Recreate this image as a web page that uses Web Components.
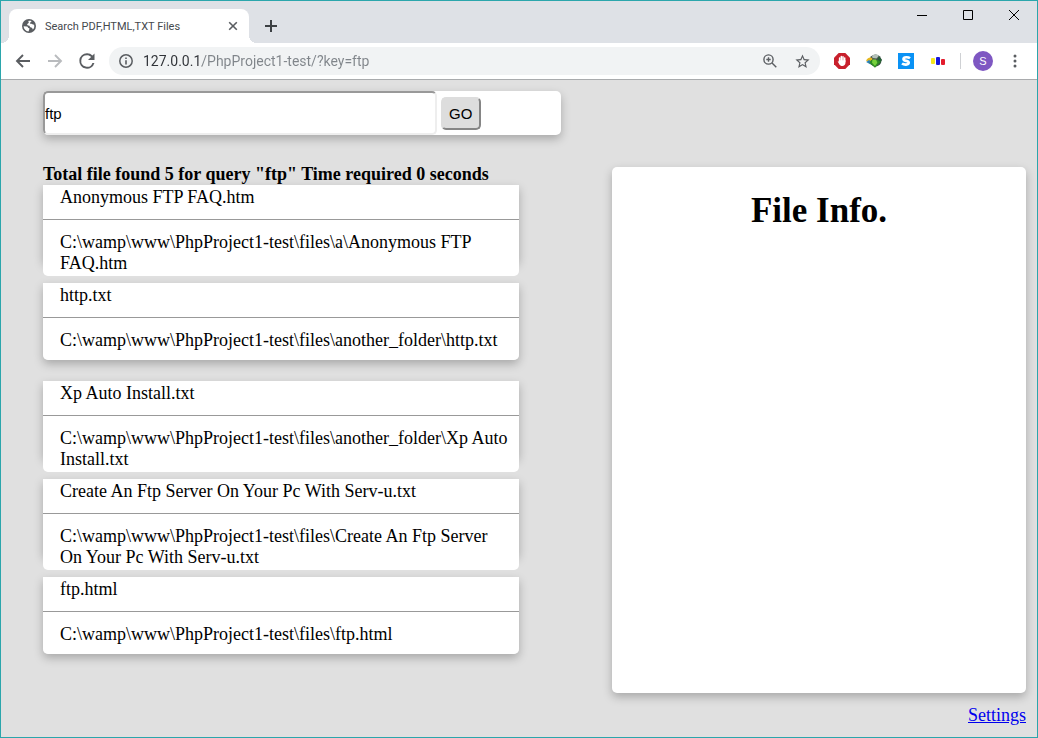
<!DOCTYPE html>
<html lang="en">
<head>
<meta charset="utf-8">
<title>Search PDF,HTML,TXT Files</title>
<style>
  body { margin: 0; font-family: "Liberation Serif", "Times New Roman", serif; }
</style>
</head>
<body>
<browser-window>
  <browser-tabs slot="chrome">Search PDF,HTML,TXT Files</browser-tabs>
  <browser-toolbar slot="chrome" url="127.0.0.1/PhpProject1-test/?key=ftp"></browser-toolbar>
  <search-page>
    <search-form slot="search" query="ftp"></search-form>
    <span slot="summary">Total file found 5 for query "ftp" Time required 0 seconds</span>
    <result-card><span slot="name">Anonymous FTP FAQ.htm</span>C:\wamp\www\PhpProject1-test\files\a\Anonymous FTP FAQ.htm</result-card>
    <result-card><span slot="name">http.txt</span>C:\wamp\www\PhpProject1-test\files\another_folder\http.txt</result-card>
    <result-card><span slot="name">Xp Auto Install.txt</span>C:\wamp\www\PhpProject1-test\files\another_folder\Xp Auto Install.txt</result-card>
    <result-card><span slot="name">Create An Ftp Server On Your Pc With Serv-u.txt</span>C:\wamp\www\PhpProject1-test\files\Create An Ftp Server On Your Pc With Serv-u.txt</result-card>
    <result-card><span slot="name">ftp.html</span>C:\wamp\www\PhpProject1-test\files\ftp.html</result-card>
    <file-info slot="aside">File Info.</file-info>
  </search-page>
</browser-window>

<script>
const define = (name, html, setup) => {
  const template = document.createElement('template');
  template.innerHTML = html;
  customElements.define(name, class extends HTMLElement {
    constructor() {
      super();
      this.attachShadow({ mode: 'open' }).append(template.content.cloneNode(true));
    }
    connectedCallback() { if (setup) setup(this, this.shadowRoot); }
  });
};

define('browser-window', `
  <style>
    :host { display: flex; flex-direction: column; box-sizing: border-box; min-height: 100vh; border: 1px solid #2ba6ac; background: #e0e0e0; }
    ::slotted(search-page) { flex: 1; }
  </style>
  <slot name="chrome"></slot>
  <slot></slot>`);

define('icon-button', `
  <style>
    :host { display: block; flex: none; width: 32px; height: 28px; color: #5a5d61; }
    button { display: flex; align-items: center; justify-content: center; width: 100%; height: 100%; padding: 0; border: 0; background: none; color: inherit; }
    ::slotted(svg) { display: block; }
  </style>
  <button type="button"><slot></slot></button>`,
  (host, root) => root.querySelector('button').setAttribute('aria-label', host.getAttribute('label')));

define('browser-tabs', `
  <style>
    :host { display: flex; align-items: flex-end; height: 42px; background: #dee1e6; font-family: Roboto, "Noto Sans", sans-serif; }
    .tab { position: relative; display: flex; align-items: center; box-sizing: border-box; width: 240px; height: 34px; margin-left: 8px; padding: 0 8px 0 12px; border-radius: 8px 8px 0 0; background: #fff; font-size: 11px; color: #45494d; }
    .tab::before, .tab::after { content: ""; position: absolute; bottom: 0; width: 8px; height: 8px; }
    .tab::before { right: 100%; background: radial-gradient(circle at 0 0, #dee1e6 8px, #fff 8px); }
    .tab::after { left: 100%; background: radial-gradient(circle at 100% 0, #dee1e6 8px, #fff 8px); }
    .title { flex: 1; margin-left: 8px; white-space: nowrap; }
    .close { width: 16px; height: 20px; }
    .new { height: 34px; margin-left: 6px; color: #3c4043; }
    .controls { display: flex; align-self: flex-start; margin-left: auto; }
    .controls icon-button { width: 46px; height: 28px; color: #000; }
  </style>
  <div class="tab">
    <svg width="16" height="16" viewBox="0 0 16 16"><circle cx="8" cy="8" r="7" fill="#5a5d61"/><path fill="#fff" d="M2.6 8.2 6 8.4c1.200.4.6 1.300 1.500 1.500 1.100.2 1.200.7.7 1.600L7.500 13.500C4.800 13.200 2.700 11 2.600 8.200zM7.300 3.100c.8-.5 2.100-.5 3 0 .3.800-.3 1.200-1.200 1.500-.4.9.2 1.300 1.100 1.200 1-.1 1.300.8 2.900.9.6 2-.1 3.800-1.300 4.900-.3-1.200-.6-2-1.700-2.100-1.200-.2-1.500-.9-1.400-1.700-.8-.2-1.900-.3-2.500-.8-.3-1.200.9-1.500 1.500-1.900.2-.8-.3-1.300-.4-2z"/></svg>
    <span class="title"><slot></slot></span>
    <icon-button class="close" label="Close tab"><svg width="10" height="10" viewBox="0 0 10 10"><path d="M1.200 1.200l7.600 7.600M8.800 1.200L1.200 8.800" stroke="currentColor" stroke-width="1.600"/></svg></icon-button>
  </div>
  <icon-button class="new" label="New tab"><svg width="12" height="12" viewBox="0 0 12 12"><path d="M6 0v12M0 6h12" stroke="currentColor" stroke-width="2"/></svg></icon-button>
  <div class="controls">
    <icon-button label="Minimize"><svg width="10" height="10" viewBox="0 0 10 10"><path d="M0 5.500h10" stroke="currentColor"/></svg></icon-button>
    <icon-button label="Maximize"><svg width="10" height="10" viewBox="0 0 10 10"><path d="M.5.5h9v9h-9z" fill="none" stroke="currentColor"/></svg></icon-button>
    <icon-button label="Close window"><svg width="10" height="10" viewBox="0 0 10 10"><path d="M0 0l10 10M10 0L0 10" stroke="currentColor"/></svg></icon-button>
  </div>`);

define('browser-toolbar', `
  <style>
    :host { display: flex; align-items: center; height: 36px; padding: 0 6px; border-bottom: 1px solid #a9abad; background: #fff; font-family: Roboto, "Noto Sans", sans-serif; }
    .dim { color: #b9bbbe; }
    .address { display: flex; align-items: center; flex: 1; height: 28px; margin: 0 6px; padding-right: 2px; box-sizing: border-box; border-radius: 14px; background: #f1f3f4; }
    .address icon-button:first-child { width: 34px; }
    input { flex: 1; min-width: 0; padding: 0; border: 0; outline: 0; font-family: inherit; font-size: 14px; background: linear-gradient(90deg, #303338 59px, #80858a 59px); -webkit-background-clip: text; background-clip: text; color: transparent; }
    .divider { width: 1px; height: 16px; margin: 0 6px; background: #cfd1d4; }
    .avatar { display: flex; align-items: center; justify-content: center; width: 20px; height: 20px; border-radius: 50%; background: #7e57c2; color: #fff; font: 11px "Liberation Sans", Arial, sans-serif; }
  </style>
  <icon-button label="Back"><svg width="16" height="14" viewBox="0 0 16 14"><path d="M15 7H2M8 1L2 7l6 6" fill="none" stroke="currentColor" stroke-width="1.900"/></svg></icon-button>
  <icon-button class="dim" label="Forward"><svg width="16" height="14" viewBox="0 0 16 14"><path d="M1 7h13M8 1l6 6-6 6" fill="none" stroke="currentColor" stroke-width="1.900"/></svg></icon-button>
  <icon-button label="Reload"><svg width="20" height="20" viewBox="0 0 24 24"><path fill="currentColor" d="M18.600 5.400A9.100 9.100 0 0 0 12 2.800a9.200 9.200 0 1 0 8.900 11.500h-2.400A6.900 6.900 0 1 1 12 5.100c1.900 0 3.600.8 4.900 2L13.200 10.800H21V3z"/></svg></icon-button>
  <div class="address">
    <icon-button label="Site information"><svg width="14" height="14" viewBox="0 0 14 14"><circle cx="7" cy="7" r="6.200" fill="none" stroke="currentColor" stroke-width="1.500"/><path d="M7 6.200v4.300M7 3.500v1.600" stroke="currentColor" stroke-width="1.600"/></svg></icon-button>
    <input type="text" aria-label="Address" spellcheck="false">
    <icon-button label="Zoom"><svg width="14" height="14" viewBox="0 0 14 14"><circle cx="5.500" cy="5.500" r="4.600" fill="none" stroke="currentColor" stroke-width="1.400"/><path d="M9 9l4.300 4.300M5.500 3.300v4.400M3.300 5.500h4.400" stroke="currentColor" stroke-width="1.400"/></svg></icon-button>
    <icon-button label="Bookmark"><svg width="17" height="17" viewBox="0 0 24 24"><path fill="currentColor" d="M22 9.240l-7.190-.62L12 2 9.190 8.630 2 9.240l5.460 4.730L5.820 21 12 17.270 18.180 21l-1.630-7.030L22 9.240zM12 15.400l-3.760 2.270 1-4.280-3.320-2.880 4.380-.38L12 6.100l1.710 4.040 4.380.38-3.320 2.880 1 4.280L12 15.400z"/></svg></icon-button>
  </div>
  <icon-button label="Ad blocker"><svg width="16" height="16" viewBox="0 0 16 16"><path fill="#c8202c" d="M4.700 0h6.600L16 4.700v6.600L11.300 16H4.700L0 11.300V4.700z"/><path d="M5.600 8.500V4.900M7.300 7.500V3.600M9 7.500V3.700M10.700 8.500V5" stroke="#fff" stroke-width="1.500" stroke-linecap="round"/><path fill="#fff" d="M4.800 7.200h6.700v2.300c0 2.100-1.300 3.500-3.100 3.500-1.500 0-2.500-.6-3.300-2L3.700 8.600c.2-.7 1-.6 1.500.2z"/></svg></icon-button>
  <icon-button label="Download manager"><svg width="16" height="16" viewBox="0 0 16 16"><circle cx="9.500" cy="7.500" r="6" fill="#46544c"/><path d="M6 3c2-2 5.500-1.900 7-.2L10.500 5.500 6.500 5z" fill="#b4c2ba"/><path d="M12.800 3.600L16 6.800l-2.600 4.500-2.200-3.500z" fill="#245f37"/><path d="M0 8.200C1 5 4 3.600 6.400 5.200l-.8 3.500-3.100-1z" fill="#e5b71d"/><path d="M.2 9L3 7l2.600 2-1 2.600z" fill="#2b7fb5"/><path d="M5 7h6.500l3.200 1.800L9 14.800 3.500 10z" fill="#2f8a25"/><path d="M6.500 6.500H10l1.300 3.300L9 13 6 9.800z" fill="#76d13b"/></svg></icon-button>
  <icon-button label="Search extension"><svg width="16" height="16" viewBox="0 0 16 16"><path fill="#0a92f5" d="M0 0h16v16H0z"/><path d="M12 5.200C10.500 4 5.600 3.600 5.500 6c-.1 2.400 5.300 1.400 5.200 3.800-.1 2.300-4.700 2.100-6.700.7" fill="none" stroke="#fff" stroke-width="2.700"/></svg></icon-button>
  <icon-button label="Chart extension"><svg width="16" height="16" viewBox="0 0 16 16"><rect x="1" y="5" width="4" height="6" rx="1" fill="#f5e51f"/><rect x="6" y="4" width="4" height="8" rx="1" fill="#1717dd"/><rect x="11" y="6" width="4" height="6" rx="1" fill="#e31b2c"/></svg></icon-button>
  <span class="divider"></span>
  <icon-button label="Profile"><span class="avatar">S</span></icon-button>
  <icon-button label="Menu"><svg width="4" height="14" viewBox="0 0 4 14"><g fill="currentColor"><circle cx="2" cy="2" r="1.500"/><circle cx="2" cy="7" r="1.500"/><circle cx="2" cy="12" r="1.500"/></g></svg></icon-button>`,
  (host, root) => { root.querySelector('input').value = host.getAttribute('url'); });

define('search-form', `
  <style>
    :host { display: block; width: 50%; }
    form { display: flex; align-items: center; gap: 4px; height: 44px; border-radius: 5px; background: #fff; box-shadow: 0 4px 10px rgba(0, 0, 0, .25); }
    input, button { box-sizing: border-box; border: 2px solid; border-radius: 5px; font: 15px "Liberation Sans", Arial, sans-serif; color: #000; }
    input { width: 76%; height: 100%; padding: 0; outline: 0; border-color: #999 #eee #eee #999; background: #fff; }
    button { width: 40px; height: 33px; padding: 0; border-color: #ddd #858585 #858585 #ddd; background: #ddd; }
  </style>
  <form onsubmit="return false">
    <input type="text" name="key" aria-label="Search query">
    <button type="submit">GO</button>
  </form>`,
  (host, root) => { root.querySelector('input').value = host.getAttribute('query'); });

define('result-card', `
  <style>
    :host { display: block; height: 98px; font-size: 18px; line-height: 21px; }
    .shadow { height: 77px; border-radius: 0 0 5px 5px; box-shadow: 0 4px 10px rgba(0, 0, 0, .25); }
    .card { border-radius: 0 0 5px 5px; background: #fff; }
    .name { height: 34px; padding: 0 8px 0 17px; border-bottom: 1px solid #999; line-height: 25px; }
    .path { padding: 12px 8px 0 17px; min-height: 30px; }
    .path::after { content: ""; display: block; height: 2px; }
  </style>
  <div class="shadow">
    <div class="card">
      <div class="name"><slot name="name"></slot></div>
      <div class="path"><slot></slot></div>
    </div>
  </div>`);

define('file-info', `
  <style>
    :host { display: block; border-radius: 5px; background: #fff; box-shadow: 0 4px 10px rgba(0, 0, 0, .25); }
    h1 { margin: 0; padding-top: 24px; font-size: 35px; line-height: 40px; text-align: center; }
  </style>
  <h1><slot></slot></h1>`);

define('search-page', `
  <style>
    :host { display: flex; flex-direction: column; padding: 11px 0; }
    .columns { display: grid; grid-template-columns: 476fr 414fr; column-gap: 93px; flex: 1; margin-top: 29px; padding: 0 11px 0 42px; }
    ::slotted([slot="search"]) { margin-left: 42px; }
    h2 { margin: 0; font-size: 18px; line-height: 21px; white-space: nowrap; }
    aside { display: flex; flex-direction: column; padding-top: 3px; }
    ::slotted([slot="aside"]) { flex: 1; }
    a { align-self: flex-end; margin-top: 12px; font-size: 18px; line-height: 21px; color: #0000ee; }
  </style>
  <slot name="search"></slot>
  <div class="columns">
    <section>
      <h2><slot name="summary"></slot></h2>
      <slot></slot>
    </section>
    <aside>
      <slot name="aside"></slot>
      <a href="#settings">Settings</a>
    </aside>
  </div>`);
</script>
</body>
</html>
